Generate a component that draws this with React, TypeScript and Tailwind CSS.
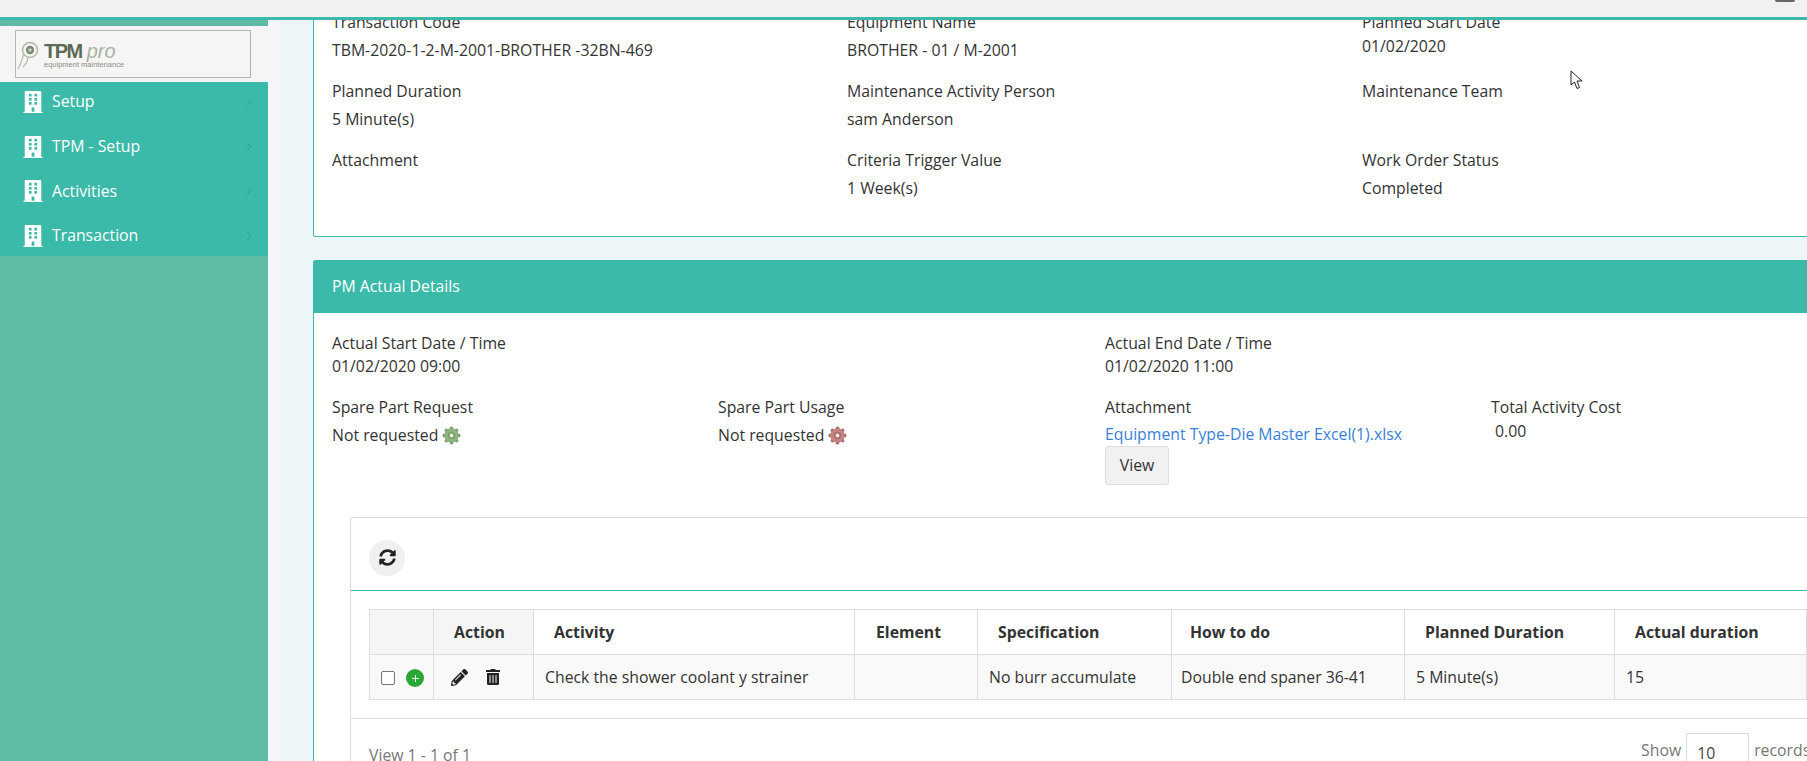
import React from 'react';
import { FaBuilding, FaPencilAlt, FaSyncAlt, FaTrashAlt } from 'react-icons/fa';
import { ChevronRight, Plus } from 'lucide-react';

const menuItems = ['Setup', 'TPM - Setup', 'Activities', 'Transaction'];

const detailRows = [
  [
    { label: 'Transaction Code', value: 'TBM-2020-1-2-M-2001-BROTHER -32BN-469' },
    { label: 'Equipment Name', value: 'BROTHER - 01 / M-2001' },
    { label: 'Planned Start Date', value: '01/02/2020', tight: true },
  ],
  [
    { label: 'Planned Duration', value: '5 Minute(s)' },
    { label: 'Maintenance Activity Person', value: 'sam Anderson' },
    { label: 'Maintenance Team', value: '' },
  ],
  [
    { label: 'Attachment', value: '' },
    { label: 'Criteria Trigger Value', value: '1 Week(s)' },
    { label: 'Work Order Status', value: 'Completed' },
  ],
];

const columns = [
  { label: '', width: 'w-[64px]', head: 'bg-[#f5f5f6]' },
  { label: 'Action', width: 'w-[100px]', head: 'bg-[#f5f5f6] pl-[20px]' },
  { label: 'Activity', width: 'w-[321px]', head: 'pl-[20px]' },
  { label: 'Element', width: 'w-[123px]', head: 'pl-[21px]' },
  { label: 'Specification', width: 'w-[194px]', head: 'pl-[20px]' },
  { label: 'How to do', width: 'w-[233px]', head: 'pl-[18px]' },
  { label: 'Planned Duration', width: 'w-[210px]', head: 'pl-[20px]' },
  { label: 'Actual duration', width: 'w-[192px]', head: 'pl-[20px]' },
];

const Gear = ({ color, dark }: { color: string; dark: string }) => (
  <svg width="19" height="19" viewBox="0 0 19 19" className="inline-block align-[-4px] ml-[4px]">
    {[0, 45, 90, 135, 180, 225, 270, 315].map((a) => (
      <circle key={a} cx="9.5" cy="2.4" r="1.9" fill={dark} transform={`rotate(${a} 9.5 9.5)`} />
    ))}
    <circle cx="9.5" cy="9.5" r="7.2" fill={color} />
    <circle cx="9.5" cy="9.5" r="3.6" fill={dark} />
    <circle cx="9.5" cy="9.5" r="1.9" fill="#eef0ea" />
  </svg>
);

const Logo = () => (
  <div className="w-[236px] h-[48px] border border-[#b5b5b5] flex items-start pl-[1px] pt-[10px] gap-[5px] overflow-hidden">
    <svg width="22" height="30" viewBox="0 0 22 30" className="shrink-0">
      <circle cx="13" cy="9" r="7.5" fill="none" stroke="#b5b8ad" strokeWidth="1.6" />
      <circle cx="13" cy="9" r="4.2" fill="#7c8a72" />
      <circle cx="13" cy="9" r="1.8" fill="#c9cdc2" />
      <path d="M6.5 13 C6 17 4 22 1 28 M10 17 C12 18 9 23 6 26" stroke="#b5b8ad" strokeWidth="1.2" fill="none" />
    </svg>
    <div className="flex flex-col leading-none">
      <div className="flex items-baseline h-[19px] leading-none">
        <span className="text-[20px] font-bold text-[#5b6b52] tracking-[-1.5px] font-['Liberation_Sans',sans-serif]">TPM</span>
        <span className="text-[20px] italic font-light text-[#a9b3a1] ml-[5px] font-['Liberation_Sans',sans-serif]">pro</span>
      </div>
      <span className="text-[7.5px] text-[#8b8f86] mt-[1px] font-['Liberation_Sans',sans-serif]">equipment maintenance</span>
    </div>
  </div>
);

const Sidebar = () => (
  <aside className="w-[268px] shrink-0 bg-[#5fbaa6] flex flex-col pt-[6px]">
    <div className="h-[56px] bg-[#f5f5f5] pl-[15px] pt-[4px] shrink-0">
      <Logo />
    </div>
    <nav className="bg-[#3bb9a9] h-[174px] flex flex-col">
      <div className="-mt-[2px]">
        {menuItems.map((item) => (
          <div key={item} className="h-[44.6px] flex items-center pl-[23px] pr-[11px] text-white shrink-0">
            <FaBuilding className="text-[22px] w-[20px] shrink-0" />
            <span className="ml-[9px] flex-1">{item}</span>
            <ChevronRight size={16} strokeWidth={1.5} className="text-[#3f9c8f]" />
          </div>
        ))}
      </div>
    </nav>
  </aside>
);

const Field = ({ label, value, tight }: { label: string; value: string; tight?: boolean }) => (
  <div className="w-[515px] shrink-0 pl-[18px]">
    <div className="h-[28px] leading-[28px]">{label}</div>
    <div className={tight ? 'h-[28px] leading-[20px]' : 'h-[28px] leading-[28px]'}>{value}</div>
  </div>
);

const TopCard = () => (
  <section className="bg-white border border-[#3bb9a9] rounded-[2px] -mt-[20px] h-[237px] w-[1560px] pt-[7px]">
    <div className="flex flex-col gap-[12px]">
      {detailRows.map((row) => (
        <div key={row[0].label} className="flex h-[57px]">
          {row.map((f) => (
            <Field key={f.label} label={f.label} value={f.value} tight={f.tight} />
          ))}
        </div>
      ))}
    </div>
  </section>
);

const RecordsTable = () => (
  <table className="table-fixed border-collapse w-[1437px] ml-[18px]">
    <colgroup>
      {columns.map((c) => (
        <col key={c.label} className={c.width} />
      ))}
    </colgroup>
    <thead>
      <tr className="h-[45px]">
        {columns.map((c) => (
          <th key={c.label} className={`border border-[#dddddd] text-left font-bold pt-[2px] ${c.head}`}>
            {c.label}
          </th>
        ))}
      </tr>
    </thead>
    <tbody>
      <tr className="h-[45px] bg-[#f9f9f9]">
        <td className="border border-[#dddddd] pl-[11px] pt-[2px]">
          <div className="flex items-center gap-[11px]">
            <span className="w-[14px] h-[14px] border border-[#767676] rounded-[2px] bg-white" />
            <span className="w-[18px] h-[18px] rounded-full bg-[#28a736] flex items-center justify-center text-white">
              <Plus size={11} strokeWidth={2} />
            </span>
          </div>
        </td>
        <td className="border border-[#dddddd] pl-[17px]">
          <div className="flex items-center gap-[17px] text-[#222222]">
            <FaPencilAlt className="text-[17px]" />
            <FaTrashAlt className="text-[16px]" />
          </div>
        </td>
        <td className="border border-[#dddddd] pl-[11px] pt-[2px]">Check the shower coolant y strainer</td>
        <td className="border border-[#dddddd]" />
        <td className="border border-[#dddddd] pl-[11px] pt-[2px]">No burr accumulate</td>
        <td className="border border-[#dddddd] pl-[9px] pt-[2px]">Double end spaner 36-41</td>
        <td className="border border-[#dddddd] pl-[11px] pt-[2px]">5 Minute(s)</td>
        <td className="border border-[#dddddd] pl-[11px] pt-[2px]">15</td>
      </tr>
    </tbody>
  </table>
);

const ActualCard = () => (
  <section className="mt-[23px] w-[1560px] bg-white border border-[#3bb9a9] rounded-[2px]">
    <header className="h-[52px] bg-[#3bb9a9] flex items-center pl-[18px] text-white">PM Actual Details</header>
    <div className="px-[18px] pt-[18px]">
      <div className="flex">
        <div className="w-[773px]">
          <div className="h-[24px] leading-[24px]">Actual Start Date / Time</div>
          <div className="h-[22px] leading-[22px]">01/02/2020 09:00</div>
        </div>
        <div>
          <div className="h-[24px] leading-[24px]">Actual End Date / Time</div>
          <div className="h-[22px] leading-[22px]">01/02/2020 11:00</div>
        </div>
      </div>
      <div className="flex mt-[16px]">
        <div className="w-[386px]">
          <div className="h-[29px] leading-[28px]">Spare Part Request</div>
          <div className="h-[27px] leading-[27px]">
            Not requested
            <Gear color="#8fb281" dark="#78a067" />
          </div>
        </div>
        <div className="w-[387px]">
          <div className="h-[29px] leading-[28px]">Spare Part Usage</div>
          <div className="h-[27px] leading-[27px]">
            Not requested
            <Gear color="#c28484" dark="#ad6767" />
          </div>
        </div>
        <div className="w-[386px]">
          <div className="h-[28px] leading-[28px]">Attachment</div>
          <div className="h-[25px] leading-[26px] text-[#3a7fd9]">Equipment Type-Die Master Excel(1).xlsx</div>
          <button className="w-[64px] h-[39px] bg-[#f1f1f1] border border-[#dddddd] rounded-[3px] text-[#333333]">View</button>
        </div>
        <div>
          <div className="h-[28px] leading-[28px]">Total Activity Cost</div>
          <div className="h-[20px] leading-[20px] pl-[4px]">0.00</div>
        </div>
      </div>
    </div>
    <div className="ml-[36px] mt-[32px] border-l border-t border-[#dddddd] rounded-tl-[3px]">
      <div className="h-[73px] border-b border-[#3bb9a9] flex items-center pl-[18px] pt-[7px]">
        <span className="w-[36px] h-[36px] rounded-full bg-[#f0f0f0] flex items-center justify-center text-[#222222]">
          <FaSyncAlt className="text-[17px]" />
        </span>
      </div>
      <div className="pt-[18px] pb-[18px] border-b border-[#dddddd]">
        <RecordsTable />
      </div>
      <div className="h-[60px] flex items-start pl-[18px] pt-[14px] text-[#777777] w-[1500px]">
        <span className="mt-[11px] whitespace-nowrap">View 1 - 1 of 1</span>
        <div className="ml-[1170px] flex items-start gap-[5px] shrink-0">
          <span className="mt-[6px]">Show</span>
          <span className="w-[63px] h-[40px] border border-[#dddddd] pl-[10px] pt-[8px] text-[#444444]">10</span>
          <span className="mt-[6px]">records</span>
        </div>
      </div>
    </div>
  </section>
);

export default function App() {
  return (
    <div className="relative w-[1807px] h-[761px] overflow-hidden bg-[#edf5f8] flex flex-col font-['Open_Sans',sans-serif] text-[15.8px] text-[#333333]">
      <div className="h-[17px] bg-[#f1f1f1] shrink-0 flex justify-end pr-[12px]">
        <div className="w-[20px] h-[2px] bg-[#666666] rounded-b-full" />
      </div>
      <div className="h-[3px] bg-[#3bb9a9] shrink-0" />
      <div className="flex flex-1 min-h-0">
        <Sidebar />
        <main className="flex-1 min-w-0 overflow-hidden flex">
          <div className="w-[11px] bg-[#f4f6f7] shrink-0" />
          <div className="pl-[34px] min-w-0">
            <TopCard />
            <ActualCard />
          </div>
        </main>
      </div>
      {/* mouse pointer left in the screenshot */}
      <svg width="14" height="21" viewBox="0 0 14 21" className="absolute left-[1570px] top-[70px]">
        <path d="M1 1 L1 15 L4.5 12 L7 18.5 L9.5 17.5 L7 11 L12 11 Z" fill="#ffffff" stroke="#222222" strokeWidth="1" />
      </svg>
    </div>
  );
}
